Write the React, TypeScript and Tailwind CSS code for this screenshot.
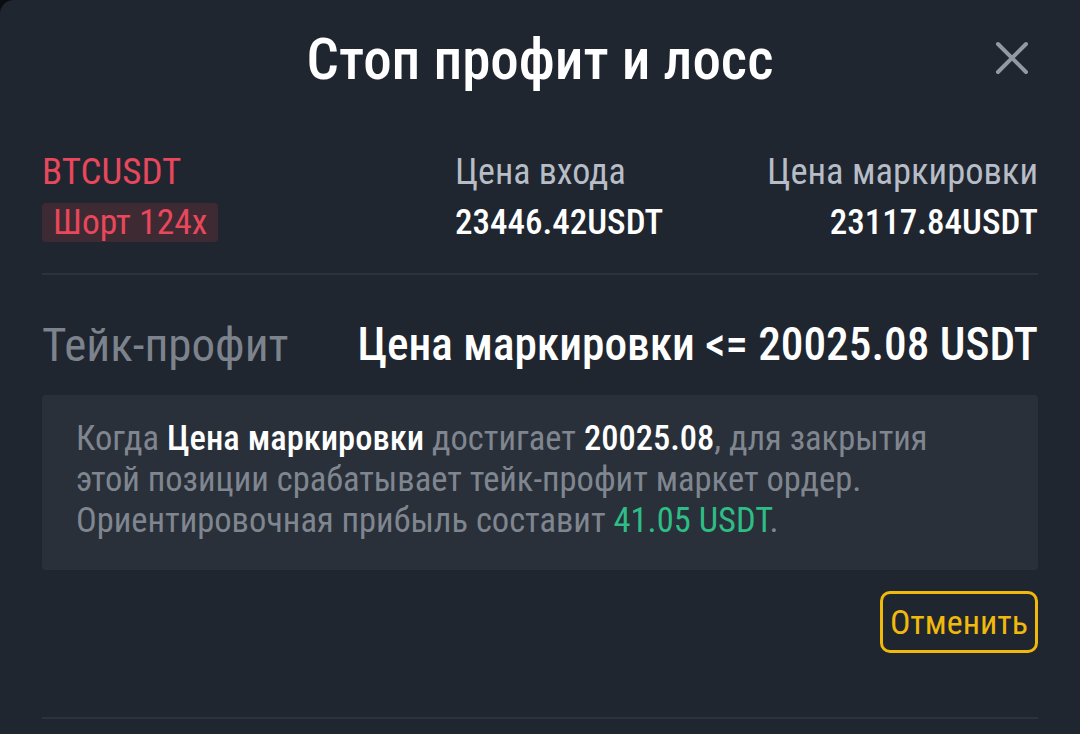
import React from 'react';

const font = { fontFamily: '"Roboto", "DejaVu Sans", sans-serif' };

export default function App() {
  return (
    <div className="min-h-[734px] w-full bg-[#0b0e11] font-stretch-condensed" style={font}>
      <div className="h-[734px] w-full rounded-tl-[14px] bg-[#1f2630] px-[42px]">
        {/* Header */}
        <div className="relative flex h-[118px] items-center justify-center">
          <h1 className="text-[57px] leading-none font-medium text-white">Стоп профит и лосс</h1>
          <button className="absolute right-[8px] top-[40px] text-[#9299a1]">
            <svg width="36" height="36" viewBox="0 0 36 36" fill="none" stroke="currentColor" strokeWidth="4" strokeLinecap="round">
              <path d="M4 4 L32 32 M32 4 L4 32" />
            </svg>
          </button>
        </div>

        {/* Position info */}
        <div className="flex pt-[32px] pb-[31px]">
          <div className="w-[413px] flex flex-col items-start">
            <span className="text-[37px] leading-[44px] text-[#e8475c]">BTCUSDT</span>
            <span className="mt-[9px] rounded-[4px] bg-[#3d2a33] px-[11px] text-[35.5px] leading-[39px] text-[#e8475c]">Шорт 124x</span>
          </div>
          <div className="flex flex-col">
            <span className="text-[36px] leading-[44px] text-[#b7bdc6]">Цена входа</span>
            <span className="mt-[9px] text-[35px] leading-[39px] font-medium text-white">23446.42USDT</span>
          </div>
          <div className="flex flex-1 flex-col items-end">
            <span className="text-[36.5px] leading-[44px] text-[#b7bdc6]">Цена маркировки</span>
            <span className="mt-[9px] text-[35px] leading-[39px] font-medium text-white">23117.84USDT</span>
          </div>
        </div>

        <div className="h-[2px] bg-[#2c333d]" />

        {/* Take profit */}
        <div className="flex items-center justify-between pt-[44px] pb-[24px]">
          <span className="text-[47px] leading-[52px] text-[#7d838c]">Тейк-профит</span>
          <span className="text-[45.3px] leading-[52px] font-medium text-white">Цена маркировки &lt;= 20025.08 USDT</span>
        </div>

        <div className="rounded-[4px] bg-[#29303a] px-[34px] pt-[23px] pb-[29px]">
          <p className="text-[34.5px] leading-[41px] text-[#80868f]">
            Когда <span className="font-medium text-white">Цена маркировки</span> достигает <span className="font-medium text-white">20025.08</span>, для закрытия
            <br />
            этой позиции срабатывает тейк-профит маркет ордер.
            <br />
            Ориентировочная прибыль составит <span className="text-[#2ebd85]">41.05 USDT</span>.
          </p>
        </div>

        <div className="flex justify-end pt-[21px]">
          <button className="h-[62px] w-[158px] rounded-[10px] border-[3px] border-[#f0b90b] text-[34px] text-[#f0b90b]">
            Отменить
          </button>
        </div>

        <div className="mt-[64px] h-[2px] bg-[#2c333d]" />
      </div>
    </div>
  );
}
